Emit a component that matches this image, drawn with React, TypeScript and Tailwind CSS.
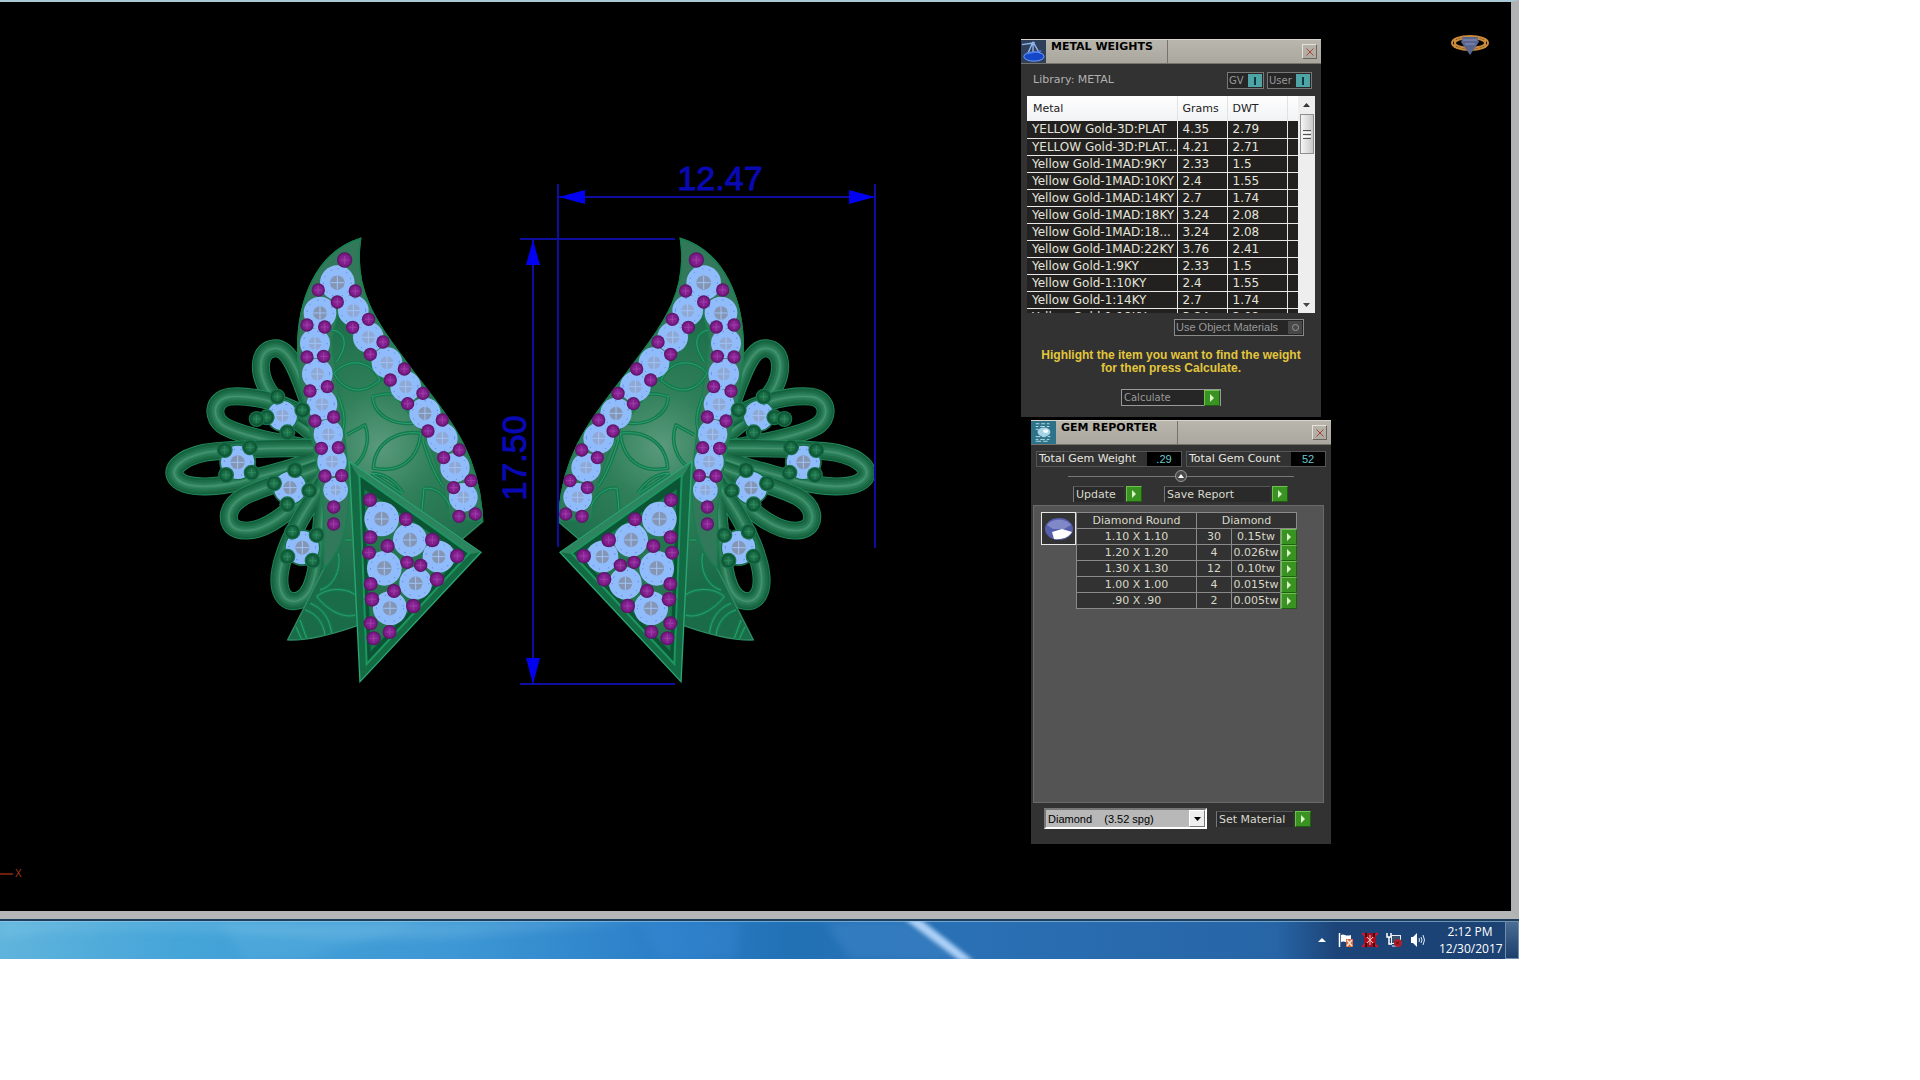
type Dot = [number, number, number?];

const metals = [
  ['YELLOW Gold-3D:PLAT', '4.35', '2.79'],
  ['YELLOW Gold-3D:PLAT...', '4.21', '2.71'],
  ['Yellow Gold-1MAD:9KY', '2.33', '1.5'],
  ['Yellow Gold-1MAD:10KY', '2.4', '1.55'],
  ['Yellow Gold-1MAD:14KY', '2.7', '1.74'],
  ['Yellow Gold-1MAD:18KY', '3.24', '2.08'],
  ['Yellow Gold-1MAD:18...', '3.24', '2.08'],
  ['Yellow Gold-1MAD:22KY', '3.76', '2.41'],
  ['Yellow Gold-1:9KY', '2.33', '1.5'],
  ['Yellow Gold-1:10KY', '2.4', '1.55'],
  ['Yellow Gold-1:14KY', '2.7', '1.74'],
  ['Yellow Gold-1:18KY', '3.24', '2.08'],
];

const gems = [
  ['1.10 X 1.10', '30', '0.15tw'],
  ['1.20 X 1.20', '4', '0.026tw'],
  ['1.30 X 1.30', '12', '0.10tw'],
  ['1.00 X 1.00', '4', '0.015tw'],
  ['.90 X .90', '2', '0.005tw'],
];

const stones: Dot[] = [
  [562, 188, 52], [510, 279, 49], [495, 370, 45], [502, 462, 46], [516, 553, 46], [535, 643, 44],
  [546, 725, 44], [557, 810, 37], [610, 272, 46], [655, 352, 46], [711, 428, 46], [767, 500, 46],
  [825, 580, 47], [877, 655, 46], [915, 743, 44], [940, 832, 43],
  [695, 897, 52], [780, 960, 51], [866, 1010, 48], [703, 1045, 52], [797, 1090, 49], [720, 1165, 51],
];

const beads: Dot[] = [
  [584, 120, 23], [505, 210], [616, 213], [562, 246], [471, 315], [524, 321], [471, 411], [521, 409],
  [480, 513], [532, 500], [495, 603], [551, 591], [514, 685], [565, 683], [525, 768], [575, 767],
  [551, 861], [551, 912], [608, 322], [656, 298], [661, 403], [699, 366], [721, 480], [763, 447],
  [773, 551], [819, 520], [834, 633], [877, 600], [881, 713], [928, 690], [911, 803], [963, 782],
  [927, 889], [976, 882], [660, 840, 21], [768, 898, 21], [661, 952, 21], [713, 978, 21], [657, 998, 21],
  [847, 960, 22], [922, 1008, 22], [771, 1027, 20], [812, 1036, 20], [861, 1078, 22], [662, 1092, 21],
  [732, 1113, 21], [666, 1138, 22], [790, 1158, 22], [662, 1210, 21], [719, 1236, 21], [671, 1255, 21],
];

const loopStones: Dot[] = [[397, 587, 44], [263, 727, 50], [420, 803, 48], [457, 983, 50]];

const prongs: Dot[] = [
  [382, 530], [457, 570], [412, 637], [350, 592], [320, 597], [224, 690], [300, 682], [305, 758],
  [228, 765], [435, 750], [372, 790], [412, 853], [478, 812], [427, 935], [500, 945], [412, 1010], [488, 1022],
];

const loops = [
  'M480 560 C450 470 420 382 375 385 C325 388 325 450 346 495 C370 545 440 600 500 650',
  'M500 610 C420 550 310 524 240 530 C187 537 182 595 225 620 C280 650 400 670 510 690',
  'M520 684 C400 684 230 688 165 698 C90 714 55 750 82 778 C114 810 210 802 290 780 C360 760 440 742 510 715',
  'M520 740 C440 775 340 800 280 830 C225 862 225 915 262 928 C320 946 390 895 430 860 C470 822 500 790 520 750',
  'M520 790 C480 850 420 940 400 1015 C376 1090 390 1144 432 1144 C478 1142 494 1080 500 1040 C512 960 520 850 526 800',
];

const leaves = [
  'M552 460 C590 415 660 415 690 480 C640 525 585 520 552 460Z',
  'M545 330 C585 335 598 370 560 425',
  'M668 530 C700 520 730 518 745 530 M668 530 C670 585 730 620 800 608',
  'M590 645 L645 615 C665 670 640 720 605 745',
  'M670 745 C675 660 750 630 812 640 C805 720 750 760 670 745Z',
  'M818 660 C830 700 850 760 880 800',
  'M822 805 C860 800 890 830 900 860 M822 805 L815 880',
  'M665 760 C710 760 740 790 760 820 M665 760 L755 820',
  'M565 530 C580 570 590 600 575 640',
  'M500 1130 C540 1095 600 1110 616 1125 M500 1130 C540 1180 590 1195 616 1185',
  'M480 1150 C520 1165 540 1200 545 1240 M465 1170 C500 1180 520 1210 525 1245',
  'M450 1200 L470 1255 M438 1220 L455 1258',
  'M585 960 L605 960 M565 1000 C575 1050 550 1100 510 1110',
];

function Stone({ x, y, r }: { x: number; y: number; r: number }) {
  return (
    <g>
      <circle cx={x} cy={y} r={r} fill="#91bcfb" />
      <circle cx={x} cy={y} r={r * 0.8} fill="none" stroke="#4c7ee0" strokeWidth="3" strokeDasharray="3 25 4 17" />
      <circle cx={x} cy={y} r={r * 0.42} fill={r > 46 ? '#8496b4' : '#8fa8d4'} />
      <path d={`M${x - 20} ${y}h40M${x} ${y - 20}v40`} stroke="#a0c4f8" strokeWidth="3" />
    </g>
  );
}

function Earring() {
  return (
    <g>
      {loops.map((d) => (
        <g key={d} fill="none" strokeLinecap="round">
          <path d={d} stroke="#238a5c" strokeWidth="54" />
          <path d={d} stroke="#14613e" strokeWidth="49" />
          <path d={d} stroke="#1c6c47" strokeWidth="38" />
          <path d={d} stroke="#267a53" strokeWidth="24" />
          <path d={d} stroke="#328561" strokeWidth="12" />
          <path d={d} stroke="#47936f" strokeWidth="4" />
        </g>
      ))}

      {/* wing and tail */}
      <path
        d="M632 55 C500 95 440 240 443 400 C450 540 490 650 500 730 L520 870 L525 1040 L413 1260 C480 1262 560 1240 640 1210 L940 955 L998 905 C990 700 900 600 790 455 C700 330 605 230 632 55Z"
        fill="url(#wing)"
        stroke="#2c8d63"
        strokeWidth="4"
      />
      <path
        d="M632 55 C500 95 440 240 443 400 C450 540 490 650 500 730 L520 870 L522 1045 C570 1000 600 920 596 800 C594 650 555 480 545 360 L565 275 C610 370 720 510 800 610 C850 680 885 800 900 900 L998 905 C990 700 900 600 790 455 C700 330 605 230 632 55Z"
        fill="#31795a"
        stroke="#14804f"
        strokeWidth="4"
      />
      <g fill="none" strokeLinejoin="round">
        {leaves.map((d) => (
          <g key={d}>
            <path d={d} stroke="#14794c" strokeWidth="11" />
            <path d={d} stroke="#2da071" strokeWidth="3" />
          </g>
        ))}
      </g>

      {/* triangular plate */}
      <path d="M598 725 L993 997 L630 1385Z" fill="#126b43" stroke="#2ca574" strokeWidth="4" />
      <path d="M600 728 L990 997 L945 1004 L625 770Z" fill="#2d855f" />
      <path d="M628 765 L958 1000 L650 1332Z" fill="#0b5535" stroke="#1d955f" strokeWidth="6" />
      <path d="M645 812 L935 1003 L664 1290Z" fill="#257550" stroke="#127a4a" strokeWidth="4" />

      {stones.map(([x, y, r]) => (
        <Stone key={`${x}-${y}`} x={x} y={y} r={r ?? 44} />
      ))}
      {beads.map(([x, y, r]) => (
        <g key={`${x}-${y}`}>
          <circle cx={x} cy={y} r={r ?? 20} fill="url(#bead)" />
          <path d={`M${x - 12} ${y}h24M${x} ${y - 12}v24`} stroke="#a544ae" strokeWidth="2" />
        </g>
      ))}
      {loopStones.map(([x, y, r]) => (
        <g key={`${x}-${y}`}>
          <circle cx={x} cy={y} r={(r ?? 42) + 4} fill="#126740" stroke="#24885d" strokeWidth="2" />
          <Stone x={x} y={y} r={r ?? 42} />
        </g>
      ))}
      {prongs.map(([x, y]) => (
        <g key={`${x}-${y}`}>
          <circle cx={x} cy={y} r="24" fill="#17714a" />
          <circle cx={x} cy={y} r="20" fill="url(#prong)" />
          <path d={`M${x - 12} ${y}h24M${x} ${y - 12}v24`} stroke="#2f8f64" strokeWidth="2" />
        </g>
      ))}
    </g>
  );
}

function Drawing() {
  return (
    <svg viewBox="0 2 1511 909" className="block h-auto w-full" role="img" aria-label="Earring model">
      <defs>
        <radialGradient id="wing" gradientUnits="userSpaceOnUse" cx="690" cy="680" r="430">
          <stop offset="0" stopColor="#5a9a7c" />
          <stop offset="0.4" stopColor="#2f7f59" />
          <stop offset="1" stopColor="#1a6b48" />
        </radialGradient>
        <radialGradient id="bead">
          <stop offset="0" stopColor="#942b9e" />
          <stop offset="0.7" stopColor="#7a1c86" />
          <stop offset="1" stopColor="#541260" />
        </radialGradient>
        <radialGradient id="prong">
          <stop offset="0" stopColor="#2a8056" />
          <stop offset="0.7" stopColor="#156540" />
          <stop offset="1" stopColor="#094b2d" />
        </radialGradient>
      </defs>

      <g transform="translate(150 220) scale(0.3333)">
        <Earring />
      </g>
      <g transform="translate(891 220) scale(-0.3333 0.3333)">
        <Earring />
      </g>

      {/* dimension lines */}
      <g stroke="#0d0da0" strokeWidth="2" fill="none">
        <path d="M558 184V547M875 184V548M558 197H875" />
        <path d="M520 239H675M520 684H675M533 239V684" />
      </g>
      <g fill="#0202f0">
        <path d="M559 197L585 190V204Z M875 197L849 190V204Z" />
        <path d="M533 240L526 265H540Z M533 684L526 658H540Z" />
      </g>
      <g fill="#0909b4" stroke="#0909b4" strokeWidth="1" fontFamily="Liberation Sans, sans-serif" fontSize="34" textAnchor="middle">
        <text x="720" y="190">12.47</text>
        <text transform="translate(526 458) rotate(-90)">17.50</text>
      </g>

      {/* axis marker */}
      <path d="M0 874H13" stroke="#6b1f0c" strokeWidth="2" />
      <text x="15" y="877" fill="#a33a18" fontFamily="Liberation Sans, sans-serif" fontSize="10">X</text>

      {/* ring view */}
      <g fill="none" stroke="#c98a3c" strokeWidth="2">
        <ellipse cx="1470" cy="43" rx="18" ry="7" />
        <ellipse cx="1470" cy="43" rx="15" ry="5" />
        <path d="M1455 38v10M1485 38v10" />
      </g>
      <path d="M1463 37h14l2 5-9 13-9-13z" fill="#59658f" />
      <path d="M1463 40h14M1465 44h10" stroke="#8d96b8" />
    </svg>
  );
}

function ScaleIcon() {
  return (
    <svg viewBox="0 0 25 25" className="h-full w-[25px] bg-[#30405a]" aria-hidden="true">
      <path d="M0 5L14 3M12 2L4 20M12 2L22 20M12 2V20" stroke="#8fb6ee" strokeWidth="1.5" fill="none" />
      <ellipse cx="13" cy="18" rx="11" ry="5" fill="#1646c8" stroke="#79a8ff" />
      <path d="M4 15L21 12" stroke="#4a7bea" strokeWidth="1.5" />
    </svg>
  );
}

function GemIcon() {
  return (
    <svg viewBox="0 0 25 25" className="h-full w-[25px] bg-[#2d7288]" aria-hidden="true">
      <path d="M4 3h4M10 3h4M16 3h3M4 6h3M9 6h5M16 6h3M4 9h3M4 17h5M11 17h4M17 17h3M4 20h3M9 20h5M16 20h3M4 22h6M12 22h5" stroke="#bfe6ee" />
      <ellipse cx="13" cy="12" rx="7" ry="5" fill="#a6d4e4" />
      <ellipse cx="15" cy="11" rx="3" ry="2" fill="#f2fcff" />
    </svg>
  );
}

function TitleBar({ title, icon }: { title: string; icon: React.ReactNode }) {
  return (
    <header className="flex h-[25px] border-t border-b border-t-[#d8d4cc] border-b-[#77736c] bg-linear-to-b from-[#b9b6ae] to-[#aaa79f] text-black">
      {icon}
      <h2 className="w-[122px] border-r border-[#77736c] pl-[5px] text-[11px] leading-[14px] font-bold whitespace-nowrap">{title}</h2>
      <div className="flex flex-1 items-center justify-end pr-1">
        <button
          type="button"
          aria-label={`Close ${title}`}
          className="flex size-[15px] items-center justify-center border border-t-[#e6e2da] border-r-[#6b675f] border-b-[#6b675f] border-l-[#e6e2da]"
        >
          <svg viewBox="0 0 8 8" className="size-2" aria-hidden="true">
            <path d="M0.500 0.500L7.500 7.500M7.500 0.500L0.500 7.500" stroke="#a8433a" />
          </svg>
        </button>
      </div>
    </header>
  );
}

function Play() {
  return (
    <span className="flex size-4 shrink-0 items-center justify-center border border-t-[#6cc24c] border-r-[#1f5f10] border-b-[#1f5f10] border-l-[#6cc24c] bg-[#3a9222]">
      <svg viewBox="0 0 6 8" className="h-2 w-1.5" aria-hidden="true">
        <path d="M1 0L5 4L1 8Z" fill="#d9f5c8" />
      </svg>
    </span>
  );
}

function PlayButton({ label, width }: { label: string; width: string }) {
  return (
    <button type="button" className="flex h-4 items-center gap-0.5 text-[11px] whitespace-nowrap">
      <span className={`${width} h-4 border-t border-l border-t-[#555] border-l-[#777] bg-[#2a2a2a] pl-0.5 text-left leading-4 text-[#d8d8cc]`}>
        {label}
      </span>
      <Play />
    </button>
  );
}

function Stat({ label, value, width }: { label: string; value: string; width: string }) {
  return (
    <div className={`${width} flex h-4 items-center border border-[#555] text-[11px] leading-[14px] whitespace-nowrap`}>
      <span className="flex-1 pl-0.5 text-[#e8e8e0]">{label}</span>
      <span className="h-full w-[34px] bg-black text-center font-['Liberation_Sans'] text-[#6cc8cc]">{value}</span>
    </div>
  );
}

function Toggle({ label, width }: { label: string; width: string }) {
  return (
    <button type="button" aria-pressed="true" className={`${width} flex h-[17px] items-center justify-between border border-[#777] bg-[#262626] px-px text-[10px] text-[#999]`}>
      {label}
      <span className="flex h-[13px] w-3.5 items-center justify-center bg-[#4fa5a5]">
        <span className="h-2 w-0.5 bg-[#0d3a40]" />
      </span>
    </button>
  );
}

function MetalWeights() {
  return (
    <section className="absolute top-[37px] left-[1021px] h-[378px] w-[300px] bg-[#323232]">
      <TitleBar title="METAL WEIGHTS" icon={<ScaleIcon />} />
      <div className="flex h-8 items-center gap-[3px] pt-px pr-[9px] pl-3">
        <span className="flex-1 text-[11px] text-[#b0b0b0]">Library: METAL</span>
        <Toggle label="GV" width="w-[37px]" />
        <Toggle label="User" width="w-[45px]" />
      </div>
      <div className="mx-1.5 flex h-[217px] overflow-hidden bg-white">
        <div className="min-w-0 flex-1 overflow-hidden">
          <table className="w-full table-fixed border-collapse text-[12px] leading-4 whitespace-nowrap">
            <thead>
              <tr className="h-[25px] bg-linear-to-b from-white to-[#f1f2f4] text-left text-[11px] text-[#222]">
                <th className="w-[150px] border-r border-[#e2e2e2] pl-1.5 font-normal">Metal</th>
                <th className="w-[50px] border-r border-[#e2e2e2] pl-[5px] font-normal">Grams</th>
                <th className="w-[60px] border-r border-[#e2e2e2] pl-[5px] font-normal">DWT</th>
                <th />
              </tr>
            </thead>
            <tbody>
              {metals.map(([name, grams, dwt]) => (
                <tr key={name} className="h-[17px] border-b border-[#e8e8e8] bg-[#22211f] text-[#e4e4dc]">
                  <td className="border-r border-[#e8e8e8] pl-[5px]">{name}</td>
                  <td className="border-r border-[#e8e8e8] pl-[5px]">{grams}</td>
                  <td className="border-r border-[#e8e8e8] pl-[5px]">{dwt}</td>
                  <td />
                </tr>
              ))}
            </tbody>
          </table>
        </div>
        {/* scroll bar */}
        <div className="flex w-[17px] flex-col items-center bg-[#eeeeee]">
          <button type="button" aria-label="Scroll up" className="flex h-[18px] w-full items-center justify-center">
            <svg viewBox="0 0 7 4" className="h-1 w-[7px]" aria-hidden="true"><path d="M0 4L3.500 0L7 4Z" fill="#333" /></svg>
          </button>
          <div className="flex h-10 w-3.5 flex-col items-center justify-center gap-px border border-[#8f8f8f] bg-linear-to-r from-[#f5f5f5] to-[#c9c9cb]">
            <span className="h-px w-2 bg-[#555]" />
            <span className="h-px w-2 bg-[#fff]" />
            <span className="h-px w-2 bg-[#555]" />
            <span className="h-px w-2 bg-[#fff]" />
            <span className="h-px w-2 bg-[#555]" />
          </div>
          <span className="flex-1" />
          <button type="button" aria-label="Scroll down" className="flex h-4 w-full items-center justify-center">
            <svg viewBox="0 0 7 4" className="h-1 w-[7px]" aria-hidden="true"><path d="M0 0L3.500 4L7 0Z" fill="#444" /></svg>
          </button>
        </div>
      </div>
      <div className="mt-1.5 flex justify-end pr-[17px]">
        <button type="button" className="flex h-[17px] w-[130px] items-center justify-between border border-[#8a8a8a] bg-[#262626] px-px font-['Liberation_Sans'] text-[11px] whitespace-nowrap text-[#999]">
          Use Object Materials
          <span className="flex h-[13px] w-3.5 items-center justify-center bg-[#484848]">
            <span className="size-[7px] rounded-full border border-[#9a9a9a]" />
          </span>
        </button>
      </div>
      <p className="mt-[13px] text-center font-['Liberation_Sans'] text-[12px] leading-[13px] font-bold text-[#e2c63c]">
        Highlight the item you want to find the weight
        <br />
        for then press Calculate.
      </p>
      <div className="mt-3.5 flex justify-center">
        <button type="button" className="flex h-[17px] w-[100px] items-center justify-between border border-[#999] bg-[#262626] pl-0.5 text-[10px] text-[#999]">
          Calculate
          <Play />
        </button>
      </div>
    </section>
  );
}

function GemReporter() {
  return (
    <section className="absolute top-[418px] left-[1031px] flex h-[424px] w-[300px] flex-col bg-[#323232]">
      <TitleBar title="GEM REPORTER" icon={<GemIcon />} />
      <div className="mt-1.5 flex gap-1 pl-[5px]">
        <Stat label="Total Gem Weight" value=".29" width="w-[146px]" />
        <Stat label="Total Gem Count" value="52" width="w-[140px]" />
      </div>
      <div className="mx-[37px] mt-[3px] flex items-center">
        <span className="h-px flex-1 bg-[#777]" />
        <button type="button" aria-label="Collapse" className="flex size-3 items-center justify-center rounded-full border border-[#999] bg-[#4a4a4a]">
          <svg viewBox="0 0 6 4" className="h-1 w-1.5" aria-hidden="true"><path d="M0 4L3 0L6 4Z" fill="#fff" /></svg>
        </button>
        <span className="h-px flex-1 bg-[#777]" />
      </div>
      <div className="mt-1 flex gap-[22px] pl-[42px]">
        <PlayButton label="Update" width="w-[51px]" />
        <PlayButton label="Save Report" width="w-[106px]" />
      </div>
      <div className="mt-[3px] mr-[7px] ml-0.5 flex flex-1 items-start border border-[#6a6a6a] bg-[#545454] pt-1.5 pl-[7px]">
        <div className="flex h-[33px] w-[35px] items-center justify-center border border-[#e8e8e8] bg-[#333]">
          <svg viewBox="0 0 30 24" className="h-6 w-[30px]" aria-hidden="true">
            <ellipse cx="15" cy="12" rx="14" ry="11" fill="#565fae" />
            <path d="M3 8C8 1 22 1 27 8L20 12H9Z" fill="#8088c8" />
            <path d="M8 15L18 12L28 15C25 20 18 23 10 22Z" fill="#fff" />
          </svg>
        </div>
        <table className="w-[221px] table-fixed border-collapse text-center text-[11px] leading-[15px] whitespace-nowrap text-[#d8d8c8]">
          <colgroup>
            <col className="w-[120px]" />
            <col className="w-[35px]" />
            <col className="w-[49px]" />
            <col />
          </colgroup>
          <thead>
            <tr className="h-4 bg-[#323232]">
              <th className="border border-[#8a8a8a] p-0 font-normal">Diamond Round</th>
              <th colSpan={3} className="border border-[#8a8a8a] p-0 font-normal">Diamond</th>
            </tr>
          </thead>
          <tbody>
            {gems.map(([size, count, weight]) => (
              <tr key={size} className="h-4 bg-[#323232]">
                <td className="border border-[#8a8a8a] p-0">{size}</td>
                <td className="border border-[#8a8a8a] p-0">{count}</td>
                <td className="border border-[#8a8a8a] p-0">{weight}</td>
                <td className="p-0">
                  <button type="button" aria-label={`Select ${size}`} className="block h-[15px]">
                    <Play />
                  </button>
                </td>
              </tr>
            ))}
          </tbody>
        </table>
      </div>
      <div className="flex h-[41px] items-start gap-[9px] pt-[5px] pl-[13px]">
        <div className="relative">
          <select
            aria-label="Material"
            className="block h-[21px] w-[163px] appearance-none border-2 border-t-[#777] border-r-white border-b-white border-l-[#777] bg-[#b8b8b8] pl-0.5 font-['Liberation_Sans'] text-[11px] leading-4 text-black"
          >
            <option>{'Diamond\u00a0\u00a0\u00a0\u00a0(3.52 spg)'}</option>
          </select>
          <span className="pointer-events-none absolute top-0.5 right-0.5 flex h-[17px] w-4 items-center justify-center border border-t-white border-r-[#777] border-b-[#777] border-l-white bg-[#eee]">
            <svg viewBox="0 0 7 4" className="h-1 w-[7px]" aria-hidden="true"><path d="M0 0L3.500 4L7 0Z" fill="#000" /></svg>
          </span>
        </div>
        <div className="pt-[3px]">
          <PlayButton label="Set Material" width="w-[77px]" />
        </div>
      </div>
    </section>
  );
}

function Taskbar() {
  return (
    <footer className="relative flex h-10 items-center justify-end overflow-hidden border-t-2 border-[#1d3d5c] bg-[#2673bb] text-white">
      <svg viewBox="0 0 1519 38" preserveAspectRatio="none" className="absolute inset-0 size-full" aria-hidden="true">
        <defs>
          <linearGradient id="bar">
            <stop offset="0" stopColor="#5fb4dc" />
            <stop offset="0.12" stopColor="#45a4d8" />
            <stop offset="0.3" stopColor="#3d97d4" />
            <stop offset="0.45" stopColor="#2a7cc6" />
            <stop offset="0.52" stopColor="#2271b5" />
            <stop offset="0.64" stopColor="#2a70b4" />
            <stop offset="0.84" stopColor="#2765a6" />
            <stop offset="0.88" stopColor="#1d4478" />
            <stop offset="1" stopColor="#1b4272" />
          </linearGradient>
          <filter id="soft"><feGaussianBlur stdDeviation="2" /></filter>
          <filter id="haze"><feGaussianBlur stdDeviation="5" /></filter>
        </defs>
        <path d="M0 0H1519V38H0Z" fill="url(#bar)" />
        <g filter="url(#haze)">
          <path d="M220 0H430L300 38H245Z" fill="#7cc4ea" opacity="0.16" />
          <path d="M0 18C150 -8 300 30 480 14S620 2 640 0H0Z" fill="#a8dcf2" opacity="0.18" />
          <path d="M640 0H740L735 38H660Z" fill="#3f8fdc" opacity="0.25" />
          <path d="M825 0H905L960 38H850Z" fill="#4a8fd0" opacity="0.35" />
        </g>
        <path d="M904 -2H920L974 40H960Z" fill="#bcdcff" opacity="0.9" filter="url(#soft)" />
        <path d="M0 0.500H1519" stroke="#9dcbe6" opacity="0.6" />
      </svg>
      <div className="relative flex h-full items-center">
        <button type="button" aria-label="Show hidden icons" className="mr-3">
          <svg viewBox="0 0 8 4" className="h-1 w-2" aria-hidden="true"><path d="M0 4L4 0L8 4Z" fill="#fff" /></svg>
        </button>
        <div className="flex items-center gap-2">
          <svg viewBox="0 0 16 16" className="size-4" aria-label="Action center" role="img">
            <path d="M1.500 1V15" stroke="#fff" strokeWidth="1.500" />
            <path d="M3 3C6 1 7 5 13 3V10C8 12 7 8 3 10Z" fill="#fff" />
            <rect x="8" y="7" width="7" height="8" fill="#d9683f" />
            <path d="M9 8L14 14M14 8L9 14" stroke="#fbe3d6" strokeWidth="1.500" />
          </svg>
          <svg viewBox="0 0 16 16" className="size-4" aria-label="Antivirus" role="img">
            <path d="M2 1H14V15H2Z" fill="#a01020" />
            <path d="M0 1L16 15M16 1L0 15" stroke="#d51826" strokeWidth="2" />
            <path d="M8 3V13M5 5L11 11M11 5L5 11" stroke="#f2c0c0" />
            <path d="M4 1V5M12 1V5M4 11V15M12 11V15" stroke="#3c0c18" strokeWidth="2" />
          </svg>
          <svg viewBox="0 0 16 16" className="size-4" aria-label="Network" role="img">
            <path d="M1 1V5H5V1M3 5V12H6" fill="none" stroke="#fff" strokeWidth="1.500" />
            <rect x="5.500" y="3.500" width="9" height="8" fill="#39506c" stroke="#e8eef4" />
            <path d="M6 14H12" stroke="#e8eef4" />
            <circle cx="12" cy="11" r="4" fill="#b01e2a" />
            <path d="M10 9.500L13 12.500M13 9.500L10 12.500" stroke="#5a0a10" />
          </svg>
          <svg viewBox="0 0 16 16" className="size-4" aria-label="Volume" role="img">
            <path d="M1 5H3L7 1V15L3 11H1Z" fill="#fff" />
            <path d="M9 6Q10 8 9 10M11 5Q13 8 11 11M13 3Q16 8 13 13" fill="none" stroke="#dbe9f5" />
          </svg>
        </div>
        <div className="mr-1 ml-[13px] w-[62px] text-center font-['Open_Sans'] text-[12px] leading-[17px]">
          <div>2:12 PM</div>
          <div>12/30/2017</div>
        </div>
        <button type="button" aria-label="Show desktop" className="h-full w-3.5 border border-[#6f8fae] bg-linear-to-b from-[#4a6d94] to-[#1c3f6c]" />
      </div>
    </footer>
  );
}

export default function App() {
  return (
    <div className="min-h-screen bg-white font-['DejaVu_Sans',sans-serif]">
      <div className="w-full max-w-[1519px]">
        <div className="border-t-2 border-r-8 border-b-8 border-t-[#a9c9d6] border-r-[#b0b2b4] border-b-[#b3b5b6] bg-black">
          <main className="relative">
            <Drawing />
            <MetalWeights />
            <GemReporter />
          </main>
        </div>
        <Taskbar />
      </div>
    </div>
  );
}
